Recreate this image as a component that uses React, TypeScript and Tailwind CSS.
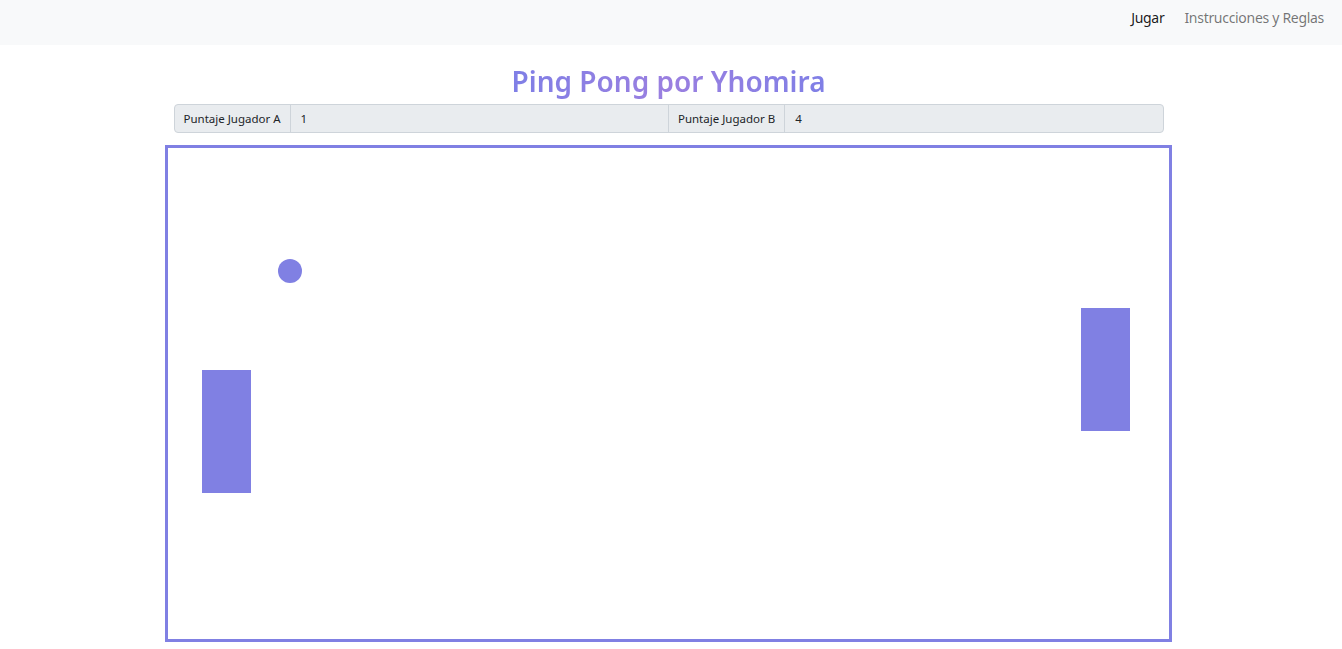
import React from 'react';

const purple = '#8080e3';

const ScoreBar = ({ a, b }: { a: number; b: number }) => (
  <div className="flex w-[990px] h-[29px] text-[11.5px] text-[#212529] border border-[#ced4da] rounded bg-[#e9ecef] overflow-hidden">
    <span className="flex items-center px-[9px] border-r border-[#ced4da] whitespace-nowrap">Puntaje Jugador A</span>
    <span className="flex items-center flex-1 px-[10px] border-r border-[#ced4da]">{a}</span>
    <span className="flex items-center px-[9px] border-r border-[#ced4da] whitespace-nowrap">Puntaje Jugador B</span>
    <span className="flex items-center flex-1 px-[10px]">{b}</span>
  </div>
);

const Board = () => (
  <div className="w-[1007px] h-[497px] border-[3px] border-[#8080e3] bg-white">
    <svg width="1001" height="491" viewBox="0 0 1001 491" className="block">
      <circle cx="122" cy="123" r="12" fill={purple} />
      <rect x="34" y="222" width="49" height="123" fill={purple} />
      <rect x="913" y="160" width="49" height="123" fill={purple} />
    </svg>
  </div>
);

export default function App() {
  return (
    <div className="min-h-[649px] bg-white" style={{ fontFamily: '"Noto Sans", "Open Sans", sans-serif' }}>
      <nav className="h-[45px] bg-[#f8f9fa] flex items-start justify-end pt-[8px] pr-[18px] gap-[20px] text-[14px] leading-[20px] tracking-[-0.3px]">
        <a className="text-black/90">Jugar</a>
        <a className="text-black/55">Instrucciones y Reglas</a>
      </nav>
      <div className="w-[1337px] flex flex-col items-center">
        <h1
          className="mt-[17px] mb-[4px] text-[28px] leading-[38px] font-semibold bg-gradient-to-r from-[#7f7fe6] via-[#9a7fe0] to-[#7f7fe6] bg-clip-text text-transparent"
        >
          Ping Pong por Yhomira
        </h1>
        <ScoreBar a={1} b={4} />
        <div className="mt-[12px]">
          <Board />
        </div>
      </div>
    </div>
  );
}
